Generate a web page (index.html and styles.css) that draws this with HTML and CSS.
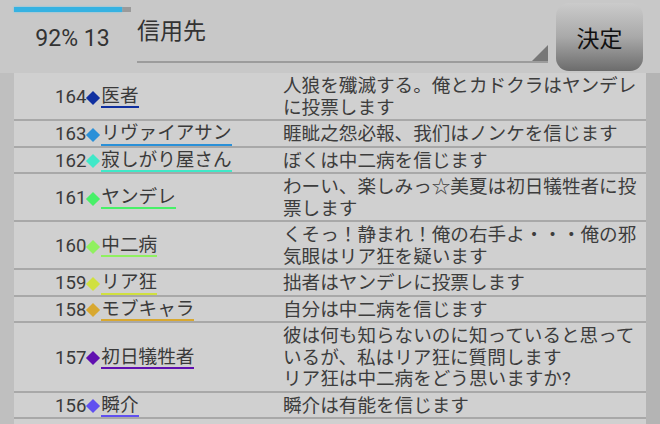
FILE: index.html
```html
<!DOCTYPE html>
<html lang="ja">
	<head>
		<meta charset="UTF-8" />
		<meta name="viewport" content="width=device-width, initial-scale=1.0" />
		<title>投票ログ</title>
		<link rel="stylesheet" href="styles.css">
	</head>
	<body>
		<div class="header">
			<div class="status">
				<div class="bar"><div class="bar-fill"></div></div>
				<div class="status-text">92% 13</div>
			</div>
			<div class="picker">信用先</div>
			<button class="decide">決定</button>
		</div>
		<div class="board">
			<div class="log">
				<div class="row">
					<div class="who"><span class="no">164</span><i class="dia c164"></i><span class="name c164">医者</span></div>
					<div class="msg">人狼を殲滅する。俺とカドクラはヤンデレに投票します</div>
				</div>
				<div class="row">
					<div class="who"><span class="no">163</span><i class="dia c163"></i><span class="name c163">リヴァイアサン</span></div>
					<div class="msg">睚眦之怨必報、我们はノンケを信じます</div>
				</div>
				<div class="row">
					<div class="who"><span class="no">162</span><i class="dia c162"></i><span class="name c162">寂しがり屋さん</span></div>
					<div class="msg">ぼくは中二病を信じます</div>
				</div>
				<div class="row">
					<div class="who"><span class="no">161</span><i class="dia c161"></i><span class="name c161">ヤンデレ</span></div>
					<div class="msg">わーい、楽しみっ☆美夏は初日犠牲者に投票します</div>
				</div>
				<div class="row">
					<div class="who"><span class="no">160</span><i class="dia c160"></i><span class="name c160">中二病</span></div>
					<div class="msg">くそっ！静まれ！俺の右手よ・・・俺の邪気眼はリア狂を疑います</div>
				</div>
				<div class="row">
					<div class="who"><span class="no">159</span><i class="dia c159"></i><span class="name c159">リア狂</span></div>
					<div class="msg">拙者はヤンデレに投票します</div>
				</div>
				<div class="row">
					<div class="who"><span class="no">158</span><i class="dia c158"></i><span class="name c158">モブキャラ</span></div>
					<div class="msg">自分は中二病を信じます</div>
				</div>
				<div class="row">
					<div class="who"><span class="no">157</span><i class="dia c157"></i><span class="name c157">初日犠牲者</span></div>
					<div class="msg">彼は何も知らないのに知っていると思っているが、私はリア狂に質問します<br>リア狂は中二病をどう思いますか?</div>
				</div>
				<div class="row">
					<div class="who"><span class="no">156</span><i class="dia c156"></i><span class="name c156">瞬介</span></div>
					<div class="msg">瞬介は有能を信じます</div>
				</div>
			</div>
		</div>
	</body>
</html>
```

FILE: styles.css
```css
body {
	margin: 0;
	height: 424px;
	overflow: hidden;
	display: flex;
	flex-direction: column;
	background-color: #c8c8c8;
	font-family: Roboto, "Noto Sans CJK JP", sans-serif;
	color: #3a3a3a;
}
.header {
	display: flex;
	height: 73px;
	padding: 0 17px 0 14px;
	flex-shrink: 0;
}
.status {
	width: 117px;
}
.bar {
	margin-top: 7px;
	height: 5px;
	background-color: #9a9a9a;
}
.bar-fill {
	width: 92%;
	height: 100%;
	background-color: #36b2e2;
	box-shadow: 0 0 2px #5cc8f0;
}
.status-text {
	margin-top: 13px;
	font-size: 23px;
	line-height: 27px;
	text-align: center;
	color: #333;
}
.picker {
	position: relative;
	margin-left: 6px;
	width: 411px;
	height: 43px;
	padding-top: 18px;
	border-bottom: 2px solid #9c9c9c;
	font-size: 23px;
	line-height: 27px;
	color: #333;
}
.picker::after {
	content: "";
	position: absolute;
	right: 0;
	bottom: 0;
	border-style: solid;
	border-width: 0 0 16px 16px;
	border-color: transparent transparent #777 transparent;
}
.decide {
	margin-left: 8px;
	margin-top: 3px;
	width: 87px;
	height: 68px;
	border: none;
	border-radius: 13px;
	background: linear-gradient(#cbcbcb, #a9a9a9 50%, #6c6c6c);
	font-family: "Noto Sans CJK JP", sans-serif;
	font-size: 23px;
	color: #111;
	padding: 0;
}
.board {
	flex: 1;
	display: flex;
	border-left: 14px solid #bfbfbf;
	border-right: 14px solid #b4b4b4;
}
.log {
	flex: 1;
	background-color: #d0d0d0;
}
.row {
	display: grid;
	grid-template-columns: 269px 1fr;
	padding-top: 3px;
	border-bottom: 2px solid #a8a8a8;
	font-size: 18.6px;
	line-height: 21.5px;
}
.who {
	display: flex;
	align-items: center;
	padding-left: 41px;
}
.dia {
	display: inline-block;
	width: 10px;
	height: 10px;
	margin: 0 3px 0 2px;
	transform: rotate(45deg);
}
.name {
	line-height: 18.5px;
	padding-bottom: 1px;
	border-bottom: 2px solid;
}
.msg {
	color: #3d3d3d;
}
.dia.c164 { background-color: #1030a0; }
.name.c164 { border-color: #1030a0; }
.dia.c163 { background-color: #2a90d8; }
.name.c163 { border-color: #2a90d8; }
.dia.c162 { background-color: #40e8c8; }
.name.c162 { border-color: #40e8c8; }
.dia.c161 { background-color: #48f068; }
.name.c161 { border-color: #48f068; }
.dia.c160 { background-color: #90f060; }
.name.c160 { border-color: #90f060; }
.dia.c159 { background-color: #d0e040; }
.name.c159 { border-color: #d0e040; }
.dia.c158 { background-color: #d8a830; }
.name.c158 { border-color: #d8a830; }
.dia.c157 { background-color: #6010b0; }
.name.c157 { border-color: #6010b0; }
.dia.c156 { background-color: #6050f0; }
.name.c156 { border-color: #6050f0; }
```
